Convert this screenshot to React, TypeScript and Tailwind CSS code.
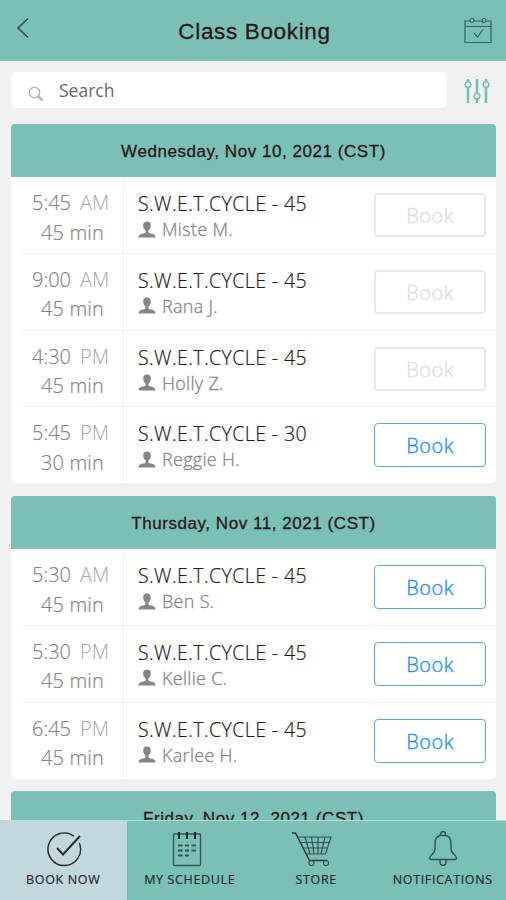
import React from 'react';

interface ClassItem {
  time: string;
  period: string;
  duration: number;
  instructor: string;
  bookable: boolean;
}

interface DaySchedule {
  date: string;
  classes: ClassItem[];
}

const schedule: DaySchedule[] = [
  {
    date: 'Wednesday, Nov 10, 2021 (CST)',
    classes: [
      { time: '5:45', period: 'AM', duration: 45, instructor: 'Miste M.', bookable: false },
      { time: '9:00', period: 'AM', duration: 45, instructor: 'Rana J.', bookable: false },
      { time: '4:30', period: 'PM', duration: 45, instructor: 'Holly Z.', bookable: false },
      { time: '5:45', period: 'PM', duration: 30, instructor: 'Reggie H.', bookable: true },
    ],
  },
  {
    date: 'Thursday, Nov 11, 2021 (CST)',
    classes: [
      { time: '5:30', period: 'AM', duration: 45, instructor: 'Ben S.', bookable: true },
      { time: '5:30', period: 'PM', duration: 45, instructor: 'Kellie C.', bookable: true },
      { time: '6:45', period: 'PM', duration: 45, instructor: 'Karlee H.', bookable: true },
    ],
  },
  { date: 'Friday, Nov 12, 2021 (CST)', classes: [] },
];

const CalendarCheckIcon = () => (
  <svg width="28" height="28" viewBox="0 0 28 28" fill="none" stroke="#37605d" strokeWidth="1.2">
    <path d="M6 4H1v21.500h26V4h-5M10 4h8M1 9.500h26" />
    <circle cx="8" cy="3.5" r="2" />
    <circle cx="20" cy="3.5" r="2" />
    <path d="M10 16l3.500 4L19 12.500" />
  </svg>
);

const FilterIcon = () => (
  <svg width="26" height="26" viewBox="0 0 26 26" fill="none" stroke="#74c1b5" strokeWidth="2.6">
    <path d="M4 1v3M4 9v16M13 1v14M13 20v5M22 1v3M22 9v16" />
    <g strokeWidth="1.5">
      <circle cx="4" cy="6.5" r="2.8" />
      <circle cx="13" cy="18" r="2.8" />
      <circle cx="22" cy="6.5" r="2.8" />
    </g>
  </svg>
);

const PersonIcon = () => (
  <svg width="18" height="17" viewBox="0 0 18 17" fill="#858585">
    <path d="M9 .5c2.700 0 3.800 1.300 3.800 3.800 0 2.400-.8 4.200-2.300 5.200v1.700c0 .6.4.9 1.200 1.100 3.600.6 5.700 1.200 5.800 4.200H.5c.1-3 2.200-3.600 5.800-4.200.8-.2 1.200-.5 1.200-1.100V9.500C6 8.500 5.200 6.700 5.200 4.300 5.200 1.800 6.300.5 9 .5z" />
  </svg>
);

const BookNowIcon = () => (
  <svg width="36" height="36" viewBox="0 0 36 36" fill="none" stroke="#2b2829" strokeWidth="1.4">
    <path d="M28 5.200A16.300 16.300 0 1 0 33.300 12" />
    <path d="M11 17l6 6.500L34 5" strokeWidth="1.9" />
  </svg>
);

const ScheduleIcon = () => (
  <svg width="30" height="36" viewBox="0 0 30 36" fill="none" stroke="#35524f" strokeWidth="1.3">
    <rect x="1.5" y="3" width="27" height="31.5" rx="1" />
    <path d="M7 1v7M15 1v7M23 1v7" stroke="#29282a" strokeWidth="2" />
    <path d="M6 14.500h4.500M13 14.500h4M19.500 14.500H24M6 19.500h4.500M13 19.500h4M19.500 19.500H24M6 24.500h4.500M13 24.500h4" strokeWidth="1.8" />
  </svg>
);

const StoreIcon = () => (
  <svg width="42" height="36" viewBox="0 0 42 36" fill="none" stroke="#35524f" strokeWidth="1.2">
    <path d="M1 2h3.500L18.500 29.500H36" stroke="#2d3938" strokeWidth="1.5" />
    <path d="M7 6h33l-5.500 17H15.500M9 11.500h29M11.500 17h25M14 6l5 17M20.500 6l2.500 17M27 6v17M34 6l-4 17" />
    <circle cx="20.500" cy="32" r="2.5" />
    <circle cx="35" cy="32" r="2.5" />
  </svg>
);

const BellIcon = () => (
  <svg width="30" height="36" viewBox="0 0 30 36" fill="none" stroke="#35524f" strokeWidth="1.4">
    <path d="M12.500 4.500V3a2.500 2.500 0 0 1 5 0v1.500" />
    <path d="M12 4.500C8.500 5.500 7 8.500 7 12v6c0 4.500-5.500 6.500-5.500 9 0 1.200.8 1.500 2 1.500h23c1.200 0 2-.3 2-1.500 0-2.500-5.500-4.500-5.500-9v-6c0-3.500-1.500-6.500-5-7.500z" />
    <path d="M12 28.500v2.800a3 3 0 0 0 6 0v-2.800" />
  </svg>
);

const tabs = [
  { label: 'BOOK NOW', icon: <BookNowIcon />, iconClass: 'ml-px', active: true },
  { label: 'MY SCHEDULE', icon: <ScheduleIcon />, iconClass: 'mr-[6px]', active: false },
  { label: 'STORE', icon: <StoreIcon />, iconClass: 'mr-[8px]', active: false },
  { label: 'NOTIFICATIONS', icon: <BellIcon />, iconClass: 'ml-px', active: false },
];

const ClassRow: React.FC<{ item: ClassItem }> = ({ item }) => (
  <div className="group flex h-[76.8px] last:h-[76px]">
    <div className="ml-[10px] w-[103px] shrink-0 border-b border-r border-[#f0f2f2] pt-[11px] text-[20px] leading-[29.5px] text-[#858585] [-webkit-text-stroke:0.2px_#858585] group-last:border-b-0">
      <div className="ml-[11px] flex whitespace-pre">
        <span className="w-[48px]">{item.time}</span>
        <span className="text-[#a6a6a6] [-webkit-text-stroke:0px]">{item.period}</span>
      </div>
      <div className="ml-[20px] tracking-[0.15px]">{item.duration} min</div>
    </div>
    <div className="flex flex-1 justify-between border-b border-[#f0f2f2] pl-[14px] pr-[10px] group-last:border-b-0">
      <div className="pt-[13px]">
        <div className="whitespace-nowrap text-[19.5px] leading-[27px] tracking-[0.42px] text-[#1c1c1c] [-webkit-text-stroke:0.2px_#1c1c1c]">S.W.E.T.CYCLE - {item.duration}</div>
        <div className="flex items-center gap-[6px] text-[18px] leading-[24px] tracking-[0.3px] text-[#858585] [-webkit-text-stroke:0.3px_#858585]">
          <PersonIcon />
          <span>{item.instructor}</span>
        </div>
      </div>
      {item.bookable ? (
        <button className="mt-[16px] h-[44px] w-[112px] shrink-0 rounded-[4px] border-[1.5px] border-[#5ba4e6] pt-[2px] text-[20px] tracking-[0.5px] text-[#2d92e3] [-webkit-text-stroke:0.4px_#2d92e3]">Book</button>
      ) : (
        <button className="mt-[16px] h-[44px] w-[112px] shrink-0 rounded-[4px] border-2 border-[#e8e8e8] pt-[2px] text-[20px] tracking-[0.5px] text-[#dedede] [-webkit-text-stroke:0.4px_#dedede]">Book</button>
      )}
    </div>
  </div>
);

const App: React.FC = () => {
  return (
    <div className="flex h-[900px] w-[506px] flex-col overflow-hidden bg-[#f1f1f1] font-['Open_Sans',sans-serif] font-light">
      <header className="flex h-[61px] shrink-0 items-center justify-between bg-[#79c0b7] pl-[17px] pr-[14px]">
        <svg className="mb-[5px]" width="28" height="20" viewBox="0 0 28 20" fill="none" stroke="#3b4b49" strokeWidth="1.6">
          <path d="M11 .5L1 10l10 9.500" />
        </svg>
        <h1 className="mt-[2px] font-['Liberation_Sans',sans-serif] text-[22.5px] font-normal tracking-[0.65px] text-[#2b1717] [-webkit-text-stroke:0.3px_#2b1717]">Class Booking</h1>
        <CalendarCheckIcon />
      </header>

      <div className="flex h-[62.6px] shrink-0 items-center pl-[11px] pr-[16px]">
        <div className="mb-[5px] flex h-[36px] w-[436px] items-center rounded-[6px] bg-white pl-[17px] text-[18px] text-[#666]">
          <svg className="mt-[9px]" width="16" height="16" viewBox="0 0 16 16" fill="none" stroke="#b5b5b5" strokeWidth="1.5">
            <circle cx="6.5" cy="6.5" r="5.2" />
            <path d="M10.500 10.500l4 4" strokeWidth="2.5" />
          </svg>
          <span className="ml-[15px] text-[17.5px] font-normal">Search</span>
        </div>
        <div className="mb-[3px] ml-auto">
          <FilterIcon />
        </div>
      </div>

      <main className="flex min-h-0 flex-1 flex-col gap-[12.2px] overflow-hidden pl-[11px] pr-[10px]">
        {schedule.map((day) => (
          <section key={day.date} className="shrink-0 overflow-hidden rounded-[4px] bg-white">
            <h2 className="flex h-[53.5px] items-center justify-center bg-[#79c0b7] pt-[2px] font-['Liberation_Sans',sans-serif] text-[17px] font-normal tracking-[0.55px] text-[#2b1717] [-webkit-text-stroke:0.3px_#2b1717]">
              {day.date}
            </h2>
            {day.classes.map((item, i) => (
              <ClassRow key={i} item={item} />
            ))}
          </section>
        ))}
      </main>

      <nav className="grid h-[80px] shrink-0 grid-cols-4 border-t border-[#b5dcd6] bg-[#79c0b7]">
        {tabs.map((tab) => (
          <div key={tab.label} className={tab.active ? 'flex flex-col items-center bg-[#c1d8df] pt-[10px]' : 'flex flex-col items-center pt-[10px]'}>
            <div className={tab.iconClass}>{tab.icon}</div>
            <span className="mt-[4px] whitespace-nowrap text-[12.5px] font-normal leading-[18px] tracking-[0.65px] text-[#292929] [-webkit-text-stroke:0.2px_#292929]">{tab.label}</span>
          </div>
        ))}
      </nav>
    </div>
  );
};

export default App;
